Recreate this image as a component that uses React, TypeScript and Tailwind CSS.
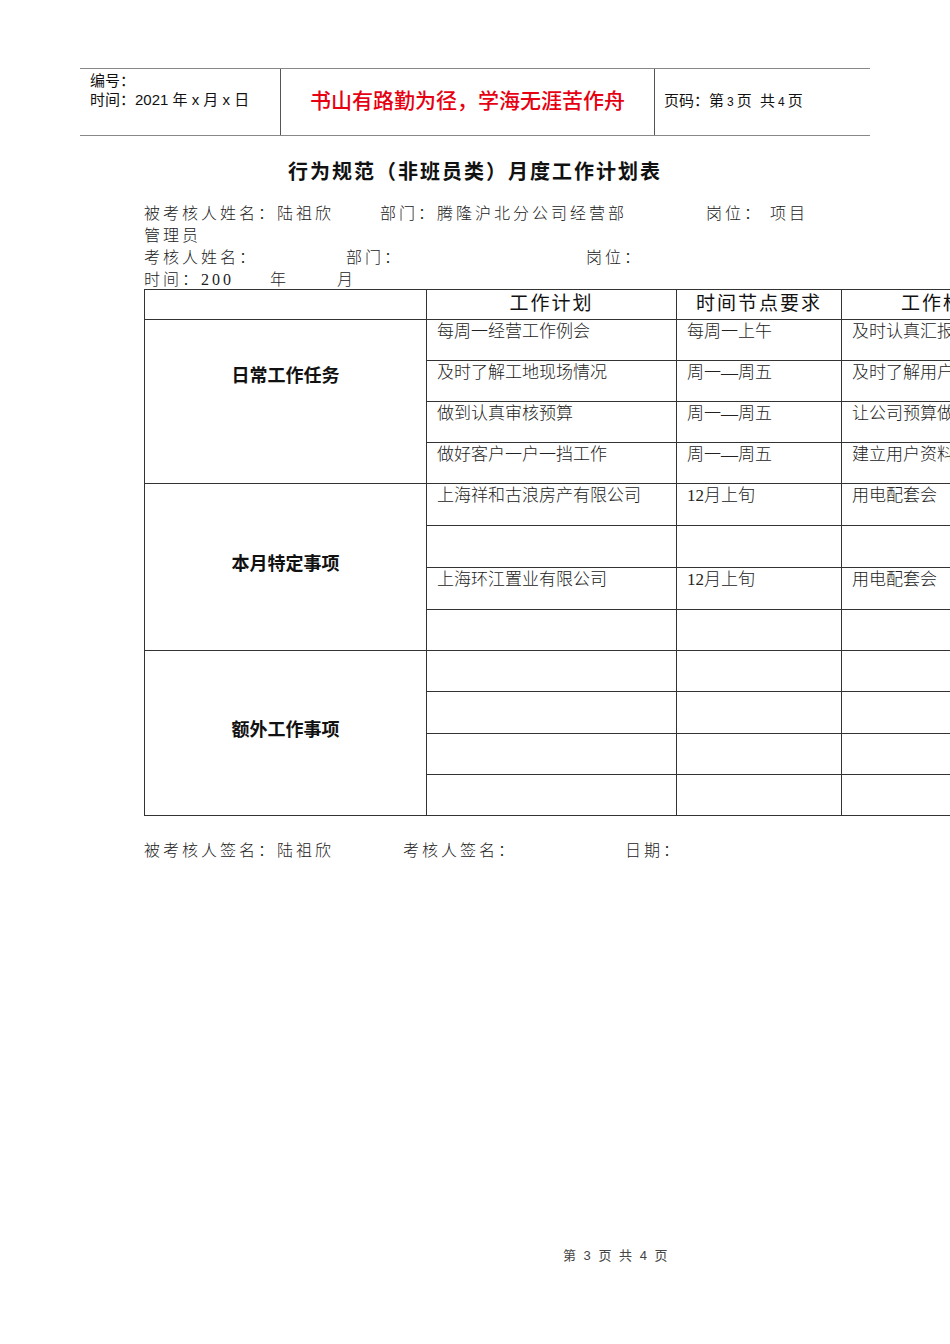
import React from 'react';

interface PlanRow {
  plan: string;
  time: string;
  standard: string;
  h: string;
}

interface Group {
  label: string;
  labelPad: string;
  rows: PlanRow[];
}

const groups: Group[] = [
  {
    label: '日常工作任务',
    labelPad: 'align-top pt-[45px]',
    rows: [
      { plan: '每周一经营工作例会', time: '每周一上午', standard: '及时认真汇报', h: 'h-[41px]' },
      { plan: '及时了解工地现场情况', time: '周一—周五', standard: '及时了解用户', h: 'h-[41px]' },
      { plan: '做到认真审核预算', time: '周一—周五', standard: '让公司预算做', h: 'h-[41px]' },
      { plan: '做好客户一户一挡工作', time: '周一—周五', standard: '建立用户资料', h: 'h-[41px]' },
    ],
  },
  {
    label: '本月特定事项',
    labelPad: 'align-middle pb-[6px]',
    rows: [
      { plan: '上海祥和古浪房产有限公司', time: '12月上旬', standard: '用电配套会', h: 'h-[42px]' },
      { plan: '', time: '', standard: '', h: 'h-[42px]' },
      { plan: '上海环江置业有限公司', time: '12月上旬', standard: '用电配套会', h: 'h-[42px]' },
      { plan: '', time: '', standard: '', h: 'h-[41px]' },
    ],
  },
  {
    label: '额外工作事项',
    labelPad: 'align-middle pb-[6px]',
    rows: [
      { plan: '', time: '', standard: '', h: 'h-[41px]' },
      { plan: '', time: '', standard: '', h: 'h-[42px]' },
      { plan: '', time: '', standard: '', h: 'h-[41px]' },
      { plan: '', time: '', standard: '', h: 'h-[41px]' },
    ],
  },
];

const serif = "font-['Liberation_Serif','Noto_Sans_CJK_SC',serif]";
const sans = "font-['Liberation_Sans','Noto_Sans_CJK_SC',sans-serif]";

const cell = 'border border-[#333] align-top pl-[10px] pt-[1px] text-[17px] leading-[22px] text-[#222] font-light whitespace-nowrap overflow-hidden';
const head = 'border border-[#333] text-[19px] font-normal tracking-[2px] text-[#111] whitespace-nowrap overflow-hidden';

export default function App() {
  return (
    <div className="w-[950px] h-[1344px] overflow-hidden bg-white flex flex-col text-black">
      {/* page header */}
      <div className={`mt-[68px] ml-[80px] w-[790px] h-[68px] border-t border-b border-[#888] grid grid-cols-[201px_374px_215px] ${sans}`}>
        <div className="border-r border-[#555] pl-[10px] pt-[2px] text-[15px] leading-[19px] text-[#111]">
          <div>编号：</div>
          <div>时间：2021 年 x 月 x 日</div>
        </div>
        <div className="border-r border-[#555] flex items-center justify-center pb-[2px] text-[21px] font-medium text-[#e60012]">
          书山有路勤为径，学海无涯苦作舟
        </div>
        <div className="flex items-center pl-[9px] pb-[1px] text-[15px] text-[#111]">
          页码：第<span className="text-[12px] mx-[3px]">3</span>页 &nbsp;共<span className="text-[12px] mx-[3px]">4</span>页
        </div>
      </div>

      {/* title */}
      <div className={`mt-[24px] h-[24px] leading-[24px] text-center text-[20px] font-bold tracking-[2px] text-[#111] ${sans}`}>
        行为规范（非班员类）月度工作计划表
      </div>

      {/* info lines */}
      <div className={`mt-[19px] ml-[144px] h-[86px] text-[16px] leading-[22px] tracking-[3px] text-[#222] font-light ${serif}`}>
        <div className="flex">
          <span className="w-[236px]">被考核人姓名：陆祖欣</span>
          <span className="w-[326px]">部门：腾隆沪北分公司经营部</span>
          <span>岗位： 项目</span>
        </div>
        <div>管理员</div>
        <div className="flex">
          <span className="w-[202px]">考核人姓名：</span>
          <span className="w-[240px]">部门：</span>
          <span>岗位：</span>
        </div>
        <div className="flex h-[20px]">
          <span className="w-[126px]">时间：200</span>
          <span className="w-[67px]">年</span>
          <span>月</span>
        </div>
      </div>

      {/* plan table */}
      <table className={`ml-[144px] border-collapse table-fixed w-[900px] shrink-0 ${serif}`}>
        <colgroup>
          <col className="w-[282px]" />
          <col className="w-[250px]" />
          <col className="w-[165px]" />
          <col className="w-[203px]" />
        </colgroup>
        <thead>
          <tr className="h-[29px]">
            <th className="border border-[#333]"></th>
            <th className={head}>工作计划</th>
            <th className={head}>时间节点要求</th>
            <th className={head}>工作标准</th>
          </tr>
        </thead>
        <tbody>
          {groups.map((g) =>
            g.rows.map((r, i) => (
              <tr key={g.label + i} className={r.h}>
                {i === 0 && (
                  <td
                    rowSpan={4}
                    className={`border border-[#333] text-center text-[18px] leading-[22px] font-bold text-[#111] font-['Liberation_Sans','Noto_Sans_CJK_SC',sans-serif] ${g.labelPad}`}
                  >
                    {g.label}
                  </td>
                )}
                <td className={cell}>{r.plan}</td>
                <td className={cell}>{r.time}</td>
                <td className={cell}>{r.standard}</td>
              </tr>
            ))
          )}
        </tbody>
      </table>

      {/* signatures */}
      <div className={`mt-[24px] ml-[144px] flex text-[16px] leading-[22px] tracking-[3px] text-[#222] font-light ${serif}`}>
        <span className="w-[259px]">被考核人签名：陆祖欣</span>
        <span className="w-[222px]">考核人签名：</span>
        <span>日期：</span>
      </div>

      {/* page footer */}
      <div className={`mt-auto mb-[80px] ml-[563px] text-[13px] leading-[16px] tracking-[2px] text-[#444] ${sans}`}>
        第 3 页 共 4 页
      </div>
    </div>
  );
}
